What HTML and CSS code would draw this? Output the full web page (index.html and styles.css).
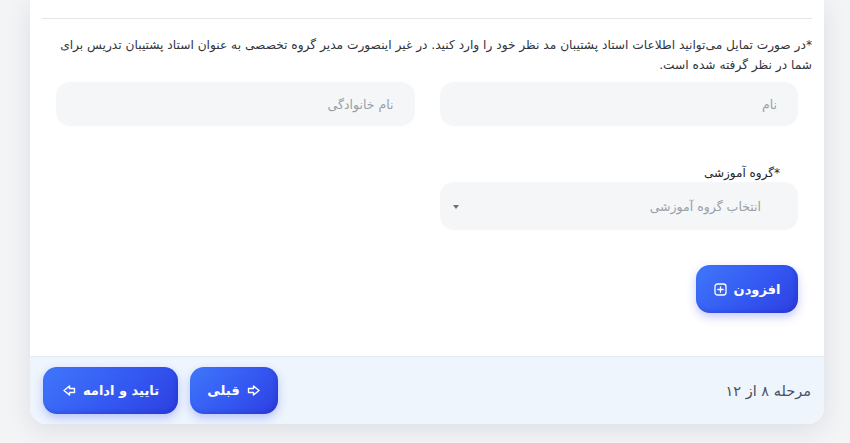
FILE: index.html
```html
<!DOCTYPE html>
<html lang="fa" dir="rtl">
<head>
<meta charset="utf-8">
<link rel="stylesheet" href="styles.css">
</head>
<body>
<div class="page">
  <div class="card">
    <div class="card-body">
      <div class="divider"></div>
      <p class="note">*در صورت تمایل می‌توانید اطلاعات استاد پشتیبان مد نظر خود را وارد کنید. در غیر اینصورت مدیر گروه تخصصی به عنوان استاد پشتیبان تدریس برای شما در نظر گرفته شده است.</p>
      <div class="form">
        <div class="grid">
          <div class="input"><span class="placeholder">نام</span></div>
          <div class="input"><span class="placeholder">نام خانوادگی</span></div>
        </div>
        <div class="grid row2">
          <div class="field">
            <div class="label">*گروه آموزشی</div>
            <div class="select">
              <span class="placeholder">انتخاب گروه آموزشی</span>
              <span class="caret"></span>
            </div>
          </div>
        </div>
        <div class="actions">
          <button class="btn btn-add">افزودن
            <svg class="ico" width="13" height="13" viewBox="0 0 13 13"><rect x="1" y="1" width="11" height="11" rx="2.5" fill="none" stroke="#fff" stroke-width="1.3"/><path d="M6.5 3.8v5.4M3.8 6.5h5.4" stroke="#fff" stroke-width="1.3" stroke-linecap="round"/></svg>
          </button>
        </div>
      </div>
    </div>
    <div class="footer">
      <span class="step">مرحله ۸ از ۱۲</span>
      <div class="nav">
        <button class="btn btn-prev">
          <svg class="ico" width="14" height="11" viewBox="0 0 14 11"><path d="M1.5 3.5h5v-2.5l5.5 4.5-5.5 4.5v-2.5h-5z" fill="none" stroke="#fff" stroke-width="1.4" stroke-linejoin="round"/></svg>
          قبلی</button>
        <button class="btn btn-next">تایید و ادامه
          <svg class="ico" width="14" height="11" viewBox="0 0 14 11"><path d="M12.5 3.5h-5v-2.5l-5.5 4.5 5.5 4.5v-2.5h5z" fill="none" stroke="#fff" stroke-width="1.4" stroke-linejoin="round"/></svg>
        </button>
      </div>
    </div>
  </div>
</div>
</body>
</html>
```
FILE: styles.css
```css
* { box-sizing: border-box; }
html, body { margin: 0; padding: 0; }
body {
  background: #f3f4f6;
  font-family: "DejaVu Sans", "Noto Sans", sans-serif;
  width: 850px;
  height: 443px;
  overflow: hidden;
}
.page {
  padding: 0 26px 0 30px;
}
.card {
  width: 794px;
  background: #fff;
  border-radius: 0 0 16px 16px;
  box-shadow: 0 6px 24px rgba(30, 40, 70, 0.10);
  overflow: hidden;
}
.card-body {
  padding: 18px 12px 43px;
}
.divider {
  height: 1px;
  background: #e3e5e9;
}
.note {
  margin: 16px 0 0;
  font-size: 12.2px;
  line-height: 20px;
  color: #30343c;
}
.form {
  padding: 0 14px;
}
.grid {
  display: grid;
  grid-template-columns: 1fr 1fr;
  column-gap: 25px;
  margin-top: 7px;
}
.grid.row2 {
  margin-top: 38px;
}
.input, .select {
  height: 44px;
  background: #f5f6f8;
  border-radius: 14px;
  display: flex;
  align-items: center;
  padding: 0 21px;
}
.placeholder {
  font-size: 12.5px;
  color: #9a9fa8;
}
.label {
  font-size: 12px;
  line-height: 18px;
  color: #23262c;
  padding-right: 18px;
}
.select {
  height: 48px;
  justify-content: space-between;
  padding: 0 37px 0 13px;
}
.caret {
  width: 0;
  height: 0;
  border-left: 3.5px solid transparent;
  border-right: 3.5px solid transparent;
  border-top: 4px solid #6b7079;
  margin-top: 2px;
}
.actions {
  display: flex;
  margin-top: 35px;
}
.btn {
  display: inline-flex;
  align-items: center;
  justify-content: center;
  gap: 7px;
  border: none;
  border-radius: 14px;
  color: #fff;
  font-family: "DejaVu Sans", sans-serif;
  font-weight: bold;
  font-size: 13px;
  background: linear-gradient(135deg, #4077fa 0%, #3458f2 55%, #2d3fe0 100%);
  box-shadow: 0 4px 10px rgba(45, 70, 230, 0.28), inset -2px -2px 4px rgba(20, 30, 170, 0.25);
  cursor: pointer;
  padding: 0;
}
.btn-add {
  width: 102px;
  height: 48px;
}
.ico { display: block; flex: none; }
.footer {
  background: #eef5fd;
  border-top: 1px solid #e3ebf5;
  display: flex;
  align-items: center;
  justify-content: space-between;
  padding: 10px 13px;
}
.step {
  font-size: 14.5px;
  color: #4b5060;
}
.nav {
  display: flex;
  gap: 12px;
}
.btn-prev {
  width: 88px;
  height: 47px;
}
.btn-next {
  width: 135px;
  height: 47px;
}
```
